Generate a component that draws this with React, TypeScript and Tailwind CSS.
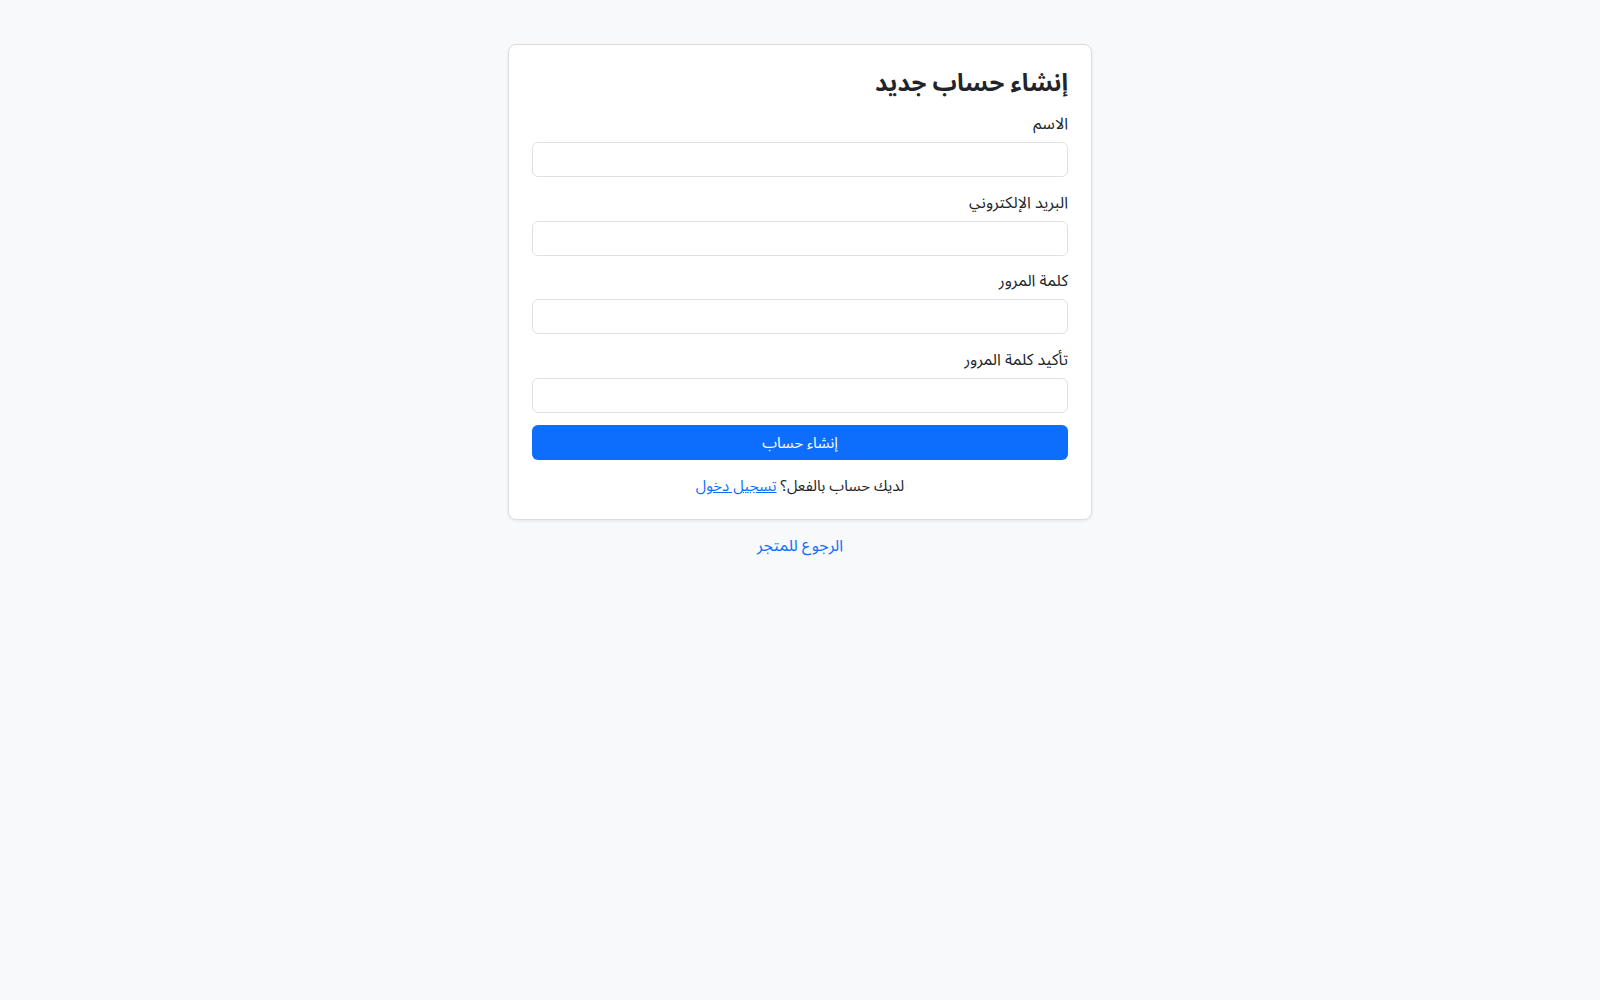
import React from "react";

const font =
  '"Noto Sans Arabic UI", "Noto Sans Arabic", "Noto Sans", "Liberation Sans", Arial, sans-serif';

function Field({ label, type = "text" }: { label: string; type?: string }) {
  return (
    <div className="mb-[12.5px]">
      <label className="block text-[16px] leading-6 text-[#212529] mb-[7px]">{label}</label>
      <input
        type={type}
        className="block w-full h-[35px] rounded-[6px] border border-[#dee2e6] bg-white px-3 text-[16px] outline-none"
      />
    </div>
  );
}

export default function App() {
  return (
    <div dir="rtl" className="min-h-screen bg-[#f8f9fa] text-[#212529]" style={{ fontFamily: font }}>
      <div className="flex flex-col items-center pt-[44px]">
        <div className="w-[584px] rounded-[8px] border border-[#dcdcdc] bg-white px-[23px] pt-[20px] pb-[22px] shadow-[0_1px_3px_rgba(0,0,0,0.08)]">
          <h3 className="text-[24px] font-bold leading-[34px] mb-[12px]">إنشاء حساب جديد</h3>
          <Field label="الاسم" />
          <Field label="البريد الإلكتروني" type="email" />
          <Field label="كلمة المرور" type="password" />
          <Field label="تأكيد كلمة المرور" type="password" />
          <button className="mt-[5px] block w-full h-[35px] rounded-[6px] bg-[#0d6efd] text-white text-[15px]">
            إنشاء حساب
          </button>
          <p className="mt-[13px] text-center text-[15px] leading-6">
            لديك حساب بالفعل؟{" "}
            <a href="#" className="text-[#0d6efd] underline">
              تسجيل دخول
            </a>
          </p>
        </div>
        <a href="#" className="mt-[13px] text-[16px] leading-6 text-[#0d6efd]">
          الرجوع للمتجر
        </a>
      </div>
    </div>
  );
}
